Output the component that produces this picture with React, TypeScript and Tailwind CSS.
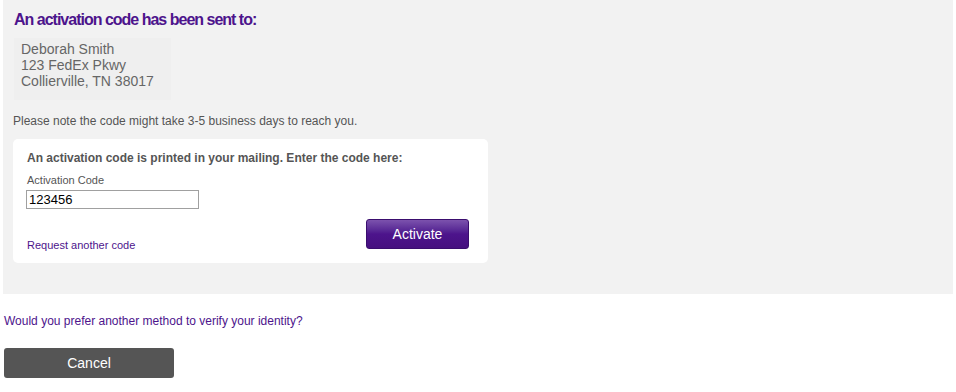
export default function App() {
  return (
    <div className="w-[956px] h-[392px] bg-white font-['Liberation_Sans',Arial,sans-serif]">
      <div className="ml-[3px] w-[950px] h-[294px] bg-[#f2f2f2] pt-[10px] pl-[10px]">
        <h1 className="pl-[1px] text-[16px] leading-[20px] font-bold tracking-[-1px] text-[#4d148c]">
          An activation code has been sent to:
        </h1>
        <div className="mt-[8px] ml-[1px] w-[157px] h-[62px] bg-[#efefef] pt-[3px] pl-[7px] text-[14px] leading-[16px] text-[#666]">
          <p>Deborah Smith</p>
          <p>123 FedEx Pkwy</p>
          <p>Collierville, TN 38017</p>
        </div>
        <p className="mt-[14px] text-[12px] leading-[14px] text-[#555]">
          Please note the code might take 3-5 business days to reach you.
        </p>
        <div className="mt-[11px] w-[475px] h-[124px] rounded-[5px] bg-white pt-[12px] pl-[14px] pr-[19px]">
          <p className="text-[12px] leading-[14px] font-bold text-[#555]">
            An activation code is printed in your mailing. Enter the code here:
          </p>
          <label className="block mt-[9px] text-[11px] leading-[13px] text-[#555]">
            Activation Code
          </label>
          <input
            defaultValue="123456"
            className="block mt-[3px] -ml-[1px] w-[173px] h-[19px] border border-[#a0a0a0] px-[2px] text-[13px] leading-[17px] text-black outline-none"
          />
          <div className="mt-[10px] flex items-start justify-between">
            <a className="mt-[20px] text-[11px] leading-[13px] text-[#4d148c]" href="#">
              Request another code
            </a>
            <button
              type="button"
              className="w-[103px] h-[30px] rounded-[3px] border border-[#3a0d6e] bg-gradient-to-b from-[#7c52ad] via-[#4d148c] to-[#46107f] text-[14px] text-white"
            >
              Activate
            </button>
          </div>
        </div>
      </div>
      <a href="#" className="block mt-[20px] ml-[4px] text-[12px] leading-[14px] text-[#4d148c]">
        Would you prefer another method to verify your identity?
      </a>
      <button
        type="button"
        className="block mt-[20px] ml-[4px] w-[170px] h-[30px] rounded-[3px] bg-[#555] text-[14px] text-white"
      >
        Cancel
      </button>
    </div>
  );
}
